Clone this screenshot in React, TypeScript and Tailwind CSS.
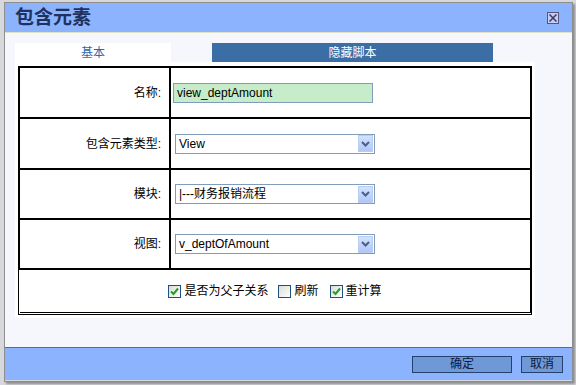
import React from 'react';

const font = { fontFamily: '"Liberation Sans", "Noto Sans CJK SC", sans-serif' };

const Chevron = () => (
  <svg width="9" height="6" viewBox="0 0 9 6">
    <path d="M1 1 L4.5 4.5 L8 1" fill="none" stroke="#4b5e86" strokeWidth="2" />
  </svg>
);

const FakeSelect: React.FC<{ value: string }> = ({ value }) => (
  <div className="ml-[4px] flex h-[20px] w-[200px] items-center border border-[#7f9db9] bg-white">
    <span className="flex-1 pl-[3px] text-[12px] leading-none text-black">{value}</span>
    <span className="mr-[1px] flex h-[17px] w-[15px] items-center justify-center border border-[#b9cdf3] bg-gradient-to-b from-[#d4e2fd] to-[#afc6f7]">
      <Chevron />
    </span>
  </div>
);

const Check: React.FC<{ checked: boolean }> = ({ checked }) => (
  <span className="flex h-[13px] w-[13px] items-center justify-center border border-[#1c5180] bg-gradient-to-br from-[#dcdcd6] to-white">
    {checked && (
      <svg width="9" height="9" viewBox="0 0 9 9">
        <path d="M1 4.5 L3.5 7 L8 1.5" fill="none" stroke="#21a121" strokeWidth="2" />
      </svg>
    )}
  </span>
);

const Row: React.FC<{ label: string; h: string; first?: boolean; children: React.ReactNode }> = ({ label, h, first, children }) => (
  <div className={`flex border-x border-b-2 border-black ${first ? 'border-t' : ''} ${h}`}>
    <div className="flex w-[151px] items-center justify-end border-r-2 border-black pr-[8px] text-[12px] leading-none text-black">
      {label}:
    </div>
    <div className="flex flex-1 items-center">{children}</div>
  </div>
);

export default function App() {
  return (
    <div className="relative h-[385px] w-[576px] overflow-hidden bg-[#d6d8dc]" style={font}>
      <div className="ml-[4px] mt-[2px] flex h-[380px] w-[569px] flex-col border border-[#8e8e8e] shadow-[2px_2px_2px_rgba(0,0,0,0.35)]">
        {/* title */}
        <div className="flex h-[30px] items-center justify-between border-b border-[#dfe1c9] bg-[#8cb3fd] pl-[10px] pr-[13px]">
          <span className="text-[19px] font-bold leading-none text-[#1e3260]">包含元素</span>
          <span className="flex h-[12px] w-[12px] items-center justify-center border border-[#55557f] bg-[#c6cdf0]">
            <svg width="8" height="8" viewBox="0 0 8 8">
              <path d="M0.5 0.5 L7.5 7.5 M7.5 0.5 L0.5 7.5" stroke="#3a3a66" strokeWidth="1.5" />
            </svg>
          </span>
        </div>

        {/* body */}
        <div className="h-[314px] bg-[#f5f7fd] px-[10px] pt-[10px]">
          <div className="flex h-[19px] text-[12px] leading-none">
            <div className="flex w-[156px] items-center justify-center bg-white text-[#2f6aa8]">基本</div>
            <div className="ml-[41px] flex w-[281px] items-center justify-center bg-[#3b6ea5] text-white">隐藏脚本</div>
          </div>
          <div className="h-[256px] w-[520px] bg-white px-[3px] pt-[4px]">
            <div className="w-[514px] border border-black pb-[1px]">
              <Row label="名称" h="h-[52px]" first>
                <div className="ml-[2px] flex h-[20px] w-[200px] items-center border border-[#7f9db9] bg-[#c6ecc9] pl-[3px] text-[12px] leading-none text-black">
                  view_deptAmount
                </div>
              </Row>
              <Row label="包含元素类型" h="h-[51px]">
                <FakeSelect value="View" />
              </Row>
              <Row label="模块" h="h-[50px]">
                <FakeSelect value="|---财务报销流程" />
              </Row>
              <Row label="视图" h="h-[50px]">
                <FakeSelect value="v_deptOfAmount" />
              </Row>
              <div className="ml-[1px] flex h-[43px] items-center justify-center border-b border-r border-black text-[12px] leading-none text-black">
                <Check checked />
                <span className="ml-[3px]">是否为父子关系</span>
                <span className="ml-[10px]"><Check checked={false} /></span>
                <span className="ml-[3px]">刷新</span>
                <span className="ml-[11px]"><Check checked /></span>
                <span className="ml-[3px]">重计算</span>
              </div>
            </div>
          </div>
        </div>

        {/* footer */}
        <div className="flex h-[33px] items-center justify-end gap-[9px] border-t border-[#4d6ea3] bg-[#8cb3fd] pr-[9px]">
          <button className="h-[17px] w-[100px] border border-[#23406f] bg-[#6e98d6] text-[12px] leading-none text-[#0c1a40]">确定</button>
          <button className="h-[17px] w-[42px] border border-[#23406f] bg-[#6e98d6] text-[12px] leading-none text-[#0c1a40]">取消</button>
        </div>
      </div>
    </div>
  );
}
